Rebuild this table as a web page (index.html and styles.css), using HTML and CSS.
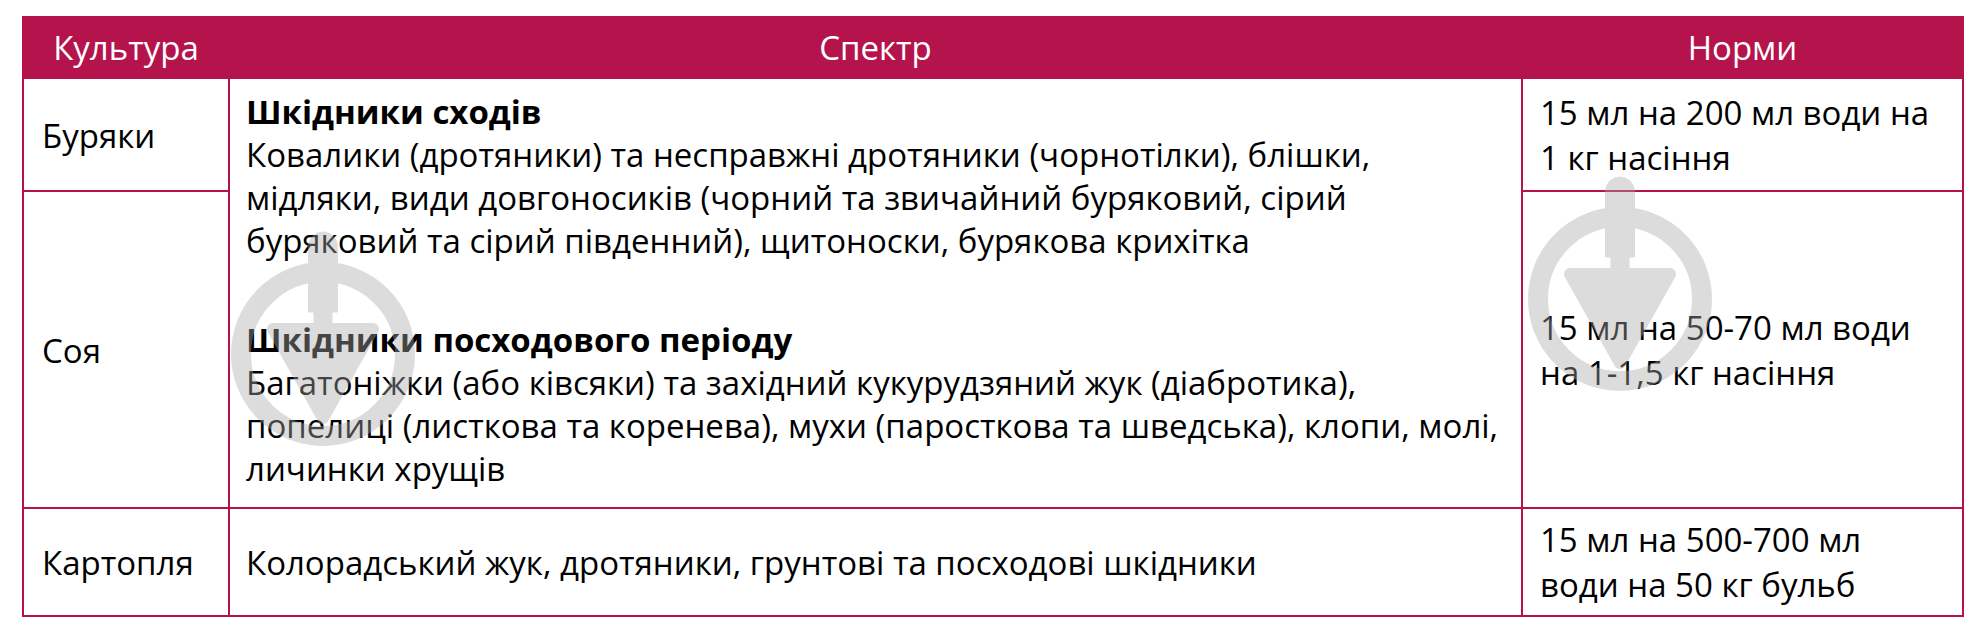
FILE: index.html
```html
<!DOCTYPE html>
<html lang="uk">
<head>
<meta charset="utf-8">
<title>Спектр</title>
<link rel="stylesheet" href="styles.css">
</head>
<body>
<div class="wrap">
  <table class="spec">
    <colgroup><col class="c1"><col class="c2"><col class="c3"></colgroup>
    <thead>
      <tr><th>Культура</th><th>Спектр</th><th>Норми</th></tr>
    </thead>
    <tbody>
      <tr class="r1">
        <td class="crop">Буряки</td>
        <td class="spectrum" rowspan="2">
          <p class="group"><b>Шкідники сходів</b><br>Ковалики (дротяники) та несправжні дротяники (чорнотілки), блішки,<br>мідляки, види довгоносиків (чорний та звичайний буряковий, сірий<br>буряковий та сірий південний), щитоноски, бурякова крихітка</p>
          <p class="group"><b>Шкідники посходового періоду</b><br>Багатоніжки (або ківсяки) та західний кукурудзяний жук (діабротика),<br>попелиці (листкова та коренева), мухи (паросткова та шведська), клопи, молі,<br>личинки хрущів</p>
        </td>
        <td class="norm">15 мл на 200 мл води на<br>1 кг насіння</td>
      </tr>
      <tr class="r2">
        <td class="crop">Соя</td>
        <td class="norm">15 мл на 50-70 мл води<br>на 1-1,5 кг насіння</td>
      </tr>
      <tr class="r3">
        <td class="crop">Картопля</td>
        <td class="spectrum-single">Колорадський жук, дротяники, грунтові та посходові шкідники</td>
        <td class="norm">15 мл на 500-700 мл<br>води на 50 кг бульб</td>
      </tr>
    </tbody>
  </table>
  <svg class="wm wm-left" viewBox="-100 -125 200 220" aria-hidden="true">
    <g class="wm-g">
      <circle cx="0" cy="0" r="82" fill="none" stroke-width="20"/>
      <path d="M-14.5 -42 V-107.5 A14.5 14.5 0 0 1 14.5 -107.5 V-42 Z"/>
      <rect x="-9" y="-44" width="18" height="17"/>
      <polygon points="-50,-25 50,-25 0,64" stroke-width="12" stroke-linejoin="round"/>
    </g>
  </svg>
  <svg class="wm wm-right" viewBox="-100 -125 200 220" aria-hidden="true">
    <g class="wm-g">
      <circle cx="0" cy="0" r="82" fill="none" stroke-width="20"/>
      <path d="M-14.5 -42 V-107.5 A14.5 14.5 0 0 1 14.5 -107.5 V-42 Z"/>
      <rect x="-9" y="-44" width="18" height="17"/>
      <polygon points="-50,-25 50,-25 0,64" stroke-width="12" stroke-linejoin="round"/>
    </g>
  </svg>
</div>
</body>
</html>
```
FILE: styles.css
```css
html, body {
  margin: 0;
  padding: 0;
  background: #ffffff;
}
body {
  font-family: "Open Sans", "Noto Sans", sans-serif;
  color: #000000;
}
.wrap {
  position: relative;
  padding: 16px 22px 0;
}
.spec {
  border-collapse: collapse;
  table-layout: fixed;
  width: 1940px;
}
.c1 { width: 206px; }
.c2 { width: 1293px; }
.c3 { width: 441px; }
.spec th {
  background: #b5134b;
  color: #ffffff;
  font-weight: normal;
  font-size: 33px;
  line-height: 40px;
  height: 59px;
  padding: 0;
  border: 2px solid #b5134b;
}
.spec td {
  border: 2px solid #b5134b;
  font-size: 33px;
  line-height: 45px;
  padding: 8px 18px 7px;
  vertical-align: middle;
  white-space: nowrap;
}
.r2 td { height: 300px; }
.r3 td { padding-bottom: 8px; }
.spec td.spectrum {
  vertical-align: top;
  line-height: 43px;
  padding: 11px 8px 17px 16px;
}
.spec td.spectrum-single {
  padding-left: 16px;
  padding-right: 8px;
}
.spec td.norm {
  padding-left: 17px;
  padding-right: 8px;
}
.group {
  margin: 0;
}
.group + .group {
  margin-top: 56px;
}
.group b {
  font-weight: bold;
}
.wm {
  position: absolute;
  width: 200px;
  height: 220px;
  pointer-events: none;
}
.wm-left { left: 223px; top: 229px; }
.wm-right { left: 1520px; top: 174px; }
.wm-g {
  fill: #aaaaaa;
  stroke: #aaaaaa;
  opacity: 0.4;
}
```
